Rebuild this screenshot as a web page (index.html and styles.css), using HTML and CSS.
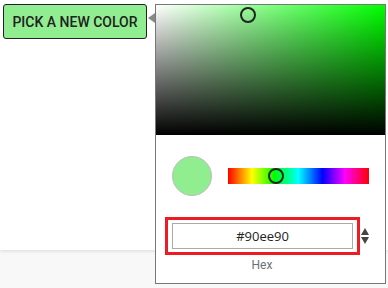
FILE: index.html
```html
<!DOCTYPE html>
<html lang="en">
<head>
  <meta charset="UTF-8">
  <title>Color Picker</title>
  <link rel="stylesheet" href="styles.css">
</head>
<body>
  <div class="top">
    <button class="pick-button" type="button">PICK A NEW COLOR</button>
  </div>

  <div class="picker">
    <div class="picker-arrow"></div>
    <div class="sv-area">
      <div class="sv-thumb"></div>
    </div>
    <div class="picker-body">
      <div class="row">
        <div class="swatch"></div>
        <div class="hue-bar">
          <div class="hue-thumb"></div>
        </div>
      </div>
      <div class="hex-row">
        <div class="hex-box">
          <input class="hex-input" type="text" value="#90ee90">
        </div>
        <div class="stepper">
          <span class="step-up"></span>
          <span class="step-down"></span>
        </div>
      </div>
      <div class="hex-label">Hex</div>
    </div>
  </div>
</body>
</html>
```

FILE: styles.css
```css
body {
  font-family: Roboto, "Liberation Sans", sans-serif;
  margin: 0;
  padding: 0;
  background-color: #f8f8f8;
  height: 288px;
  overflow: hidden;
}
.top {
  background-color: white;
  height: 250px;
  box-shadow: 0 1px 4px rgba(0, 0, 0, 0.12);
  padding: 4px 3px 0;
  box-sizing: border-box;
}
.pick-button {
  background-color: #90ee90;
  color: #222;
  font-family: Roboto, "Liberation Sans", sans-serif;
  font-size: 14px;
  font-weight: 500;
  border: 1px solid #222;
  border-radius: 3px;
  height: 35px;
  width: 144px;
  padding: 0;
}
.picker {
  position: absolute;
  left: 155px;
  top: 4px;
  width: 229px;
  height: 278px;
  border: 1px solid #777;
  background-color: white;
}
.picker-arrow {
  position: absolute;
  left: -8px;
  top: 8px;
  width: 0;
  height: 0;
  border-top: 5px solid transparent;
  border-bottom: 5px solid transparent;
  border-right: 7px solid #888;
}
.sv-area {
  position: relative;
  height: 130px;
  background: linear-gradient(to top, #000, rgba(0, 0, 0, 0)),
    linear-gradient(to right, #fff, #00ff00);
}
.sv-thumb {
  position: absolute;
  left: 84px;
  top: 2px;
  width: 12px;
  height: 12px;
  border: 2px solid #222;
  border-radius: 50%;
}
.picker-body {
  padding: 21px 16px 0;
}
.row {
  display: flex;
  align-items: center;
  gap: 16px;
}
.swatch {
  width: 38px;
  height: 38px;
  border: 1px solid #bbb;
  border-radius: 50%;
  background-color: #90ee90;
}
.hue-bar {
  position: relative;
  flex: 1;
  height: 16px;
  background: linear-gradient(to right, #f00 0%, #ff0 17%, #0f0 33%, #0ff 50%, #00f 67%, #f0f 83%, #f00 100%);
}
.hue-thumb {
  position: absolute;
  left: 40px;
  top: 0;
  width: 12px;
  height: 12px;
  border: 2px solid #222;
  border-radius: 50%;
}
.hex-row {
  display: flex;
  align-items: center;
  margin-top: 21px;
  margin-left: -7px;
}
.hex-box {
  border: 3px solid #ed1c24;
  padding: 3px 4px;
}
.hex-input {
  display: block;
  width: 181px;
  height: 26px;
  box-sizing: border-box;
  border: 1px solid #aaa;
  text-align: center;
  font-family: "Open Sans", Roboto, sans-serif;
  font-size: 13px;
  color: #222;
  padding: 0;
}
.stepper {
  display: flex;
  flex-direction: column;
  gap: 2px;
  margin-left: 1px;
}
.step-up,
.step-down {
  width: 0;
  height: 0;
  border-left: 4px solid transparent;
  border-right: 4px solid transparent;
}
.step-up {
  border-bottom: 7px solid #444;
}
.step-down {
  border-top: 7px solid #444;
}
.hex-label {
  text-align: center;
  font-size: 12px;
  color: #6b7078;
  margin-top: 3px;
  margin-left: -7px;
  width: 194px;
}
```
